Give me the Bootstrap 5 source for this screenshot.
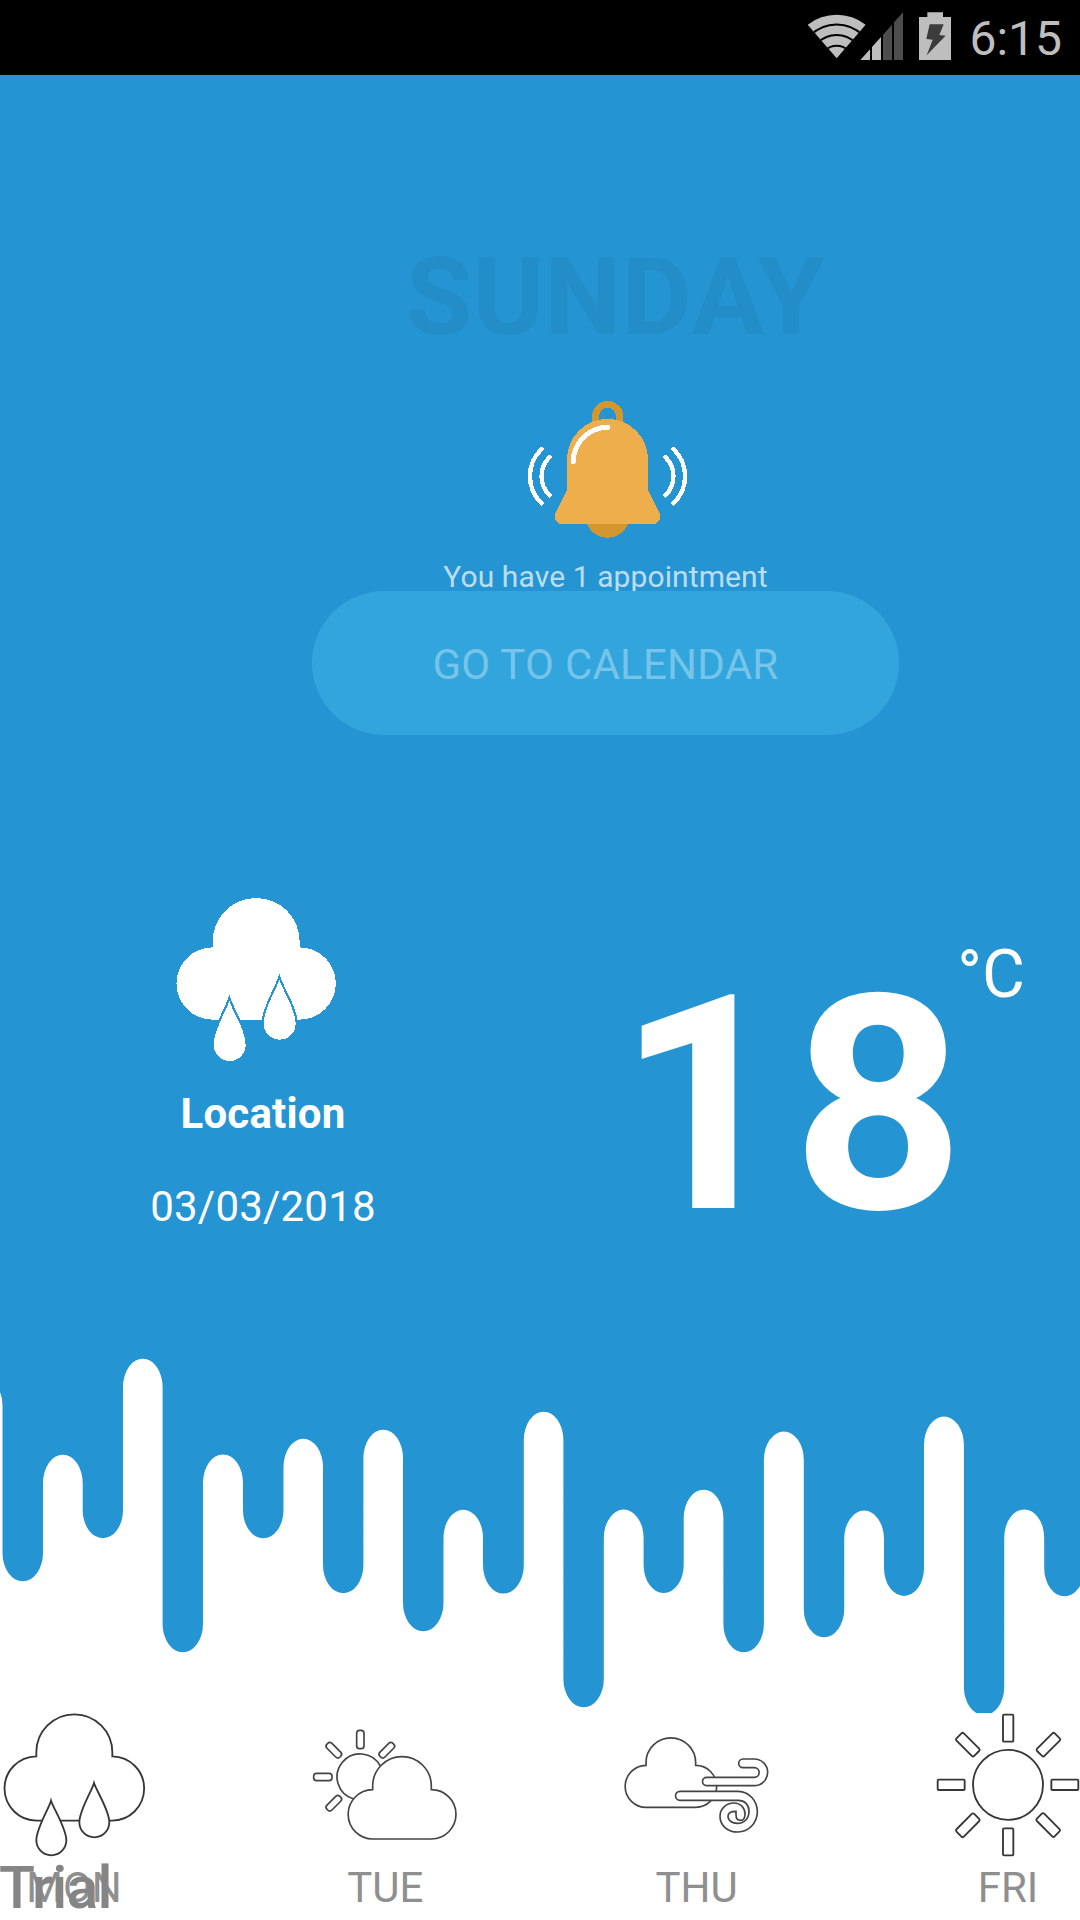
<!DOCTYPE html>
<html lang="en">
<head>
<meta charset="utf-8">
<meta name="viewport" content="width=device-width, initial-scale=1">
<title>Weather</title>
<link href="https://cdn.jsdelivr.net/npm/bootstrap@5.3.0/dist/css/bootstrap.min.css" rel="stylesheet">
<style>
:root { --sky: #2594d3; }
body { font-family: Roboto, sans-serif; font-size: 42px; line-height: 50px; background: #fff; }
svg { display: block; flex: none; overflow: visible; }
.screen { width: 1080px; height: 1920px; }
.status { height: 75px; background: #000; color: #bebebe; padding-right: 18px; }
.clock { font-size: 48px; line-height: 75px; padding-top: 2px; margin-left: 12px; }
.hero { background: var(--sky); height: 1275px; }
.agenda { width: 587px; margin-left: 312px; padding-top: 158px; }
.day-name { font-size: 108px; line-height: 128px; letter-spacing: .7px; color: #228dc6; padding-left: 20px; margin: 0; font-weight: 700; }
.bell { margin-top: 36px; }
.notice { font-size: 30px; line-height: 40px; height: 34px; margin-top: 16px; letter-spacing: .1px; color: rgba(255,255,255,.7); }
.btn-cal { --bs-btn-bg: #32a6dc; --bs-btn-hover-bg: #32a6dc; --bs-btn-color: #76c4e9; --bs-btn-border-width: 0; height: 144px; font-size: 42px; line-height: 50px; letter-spacing: .25px; }
.btn-cal span { padding-top: 4px; }
.place { width: 526px; padding-top: 163px; }
.town { margin-top: 27px; letter-spacing: .2px; }
.date { margin-top: 43px; letter-spacing: .2px; }
.degrees { font-size: 300px; line-height: 300px; padding-top: 221px; margin-left: 91px; letter-spacing: 3px; }
.unit { font-size: 66px; line-height: 80px; padding-top: 200px; margin-left: -10px; }
.forecast { height: 207px; padding-left: 2px; color: #8f8f8f; }
.forecast-day { width: 144px; }
.forecast-day div { margin-top: 6px; }
.line-art { fill: none; stroke: #363636; stroke-width: 5.5; }
.line-art.fine { stroke: #444; stroke-width: 5; }
.trial { left: -1px; top: 1856px; font-size: 59px; line-height: 64px; letter-spacing: -.8px; color: #858585; font-weight: 500; }
</style>
<script src="https://cdn.jsdelivr.net/npm/bootstrap@5.3.0/dist/js/bootstrap.bundle.min.js"></script>
</head>
<body>
<div class="screen d-flex flex-column position-relative overflow-hidden">
  <header class="status d-flex justify-content-end align-items-center">
    <svg width="152" height="75" viewBox="75 0 456 225">
      <defs><clipPath id="fan"><path d="M170 175 83 74A141 141 0 0 1 257 74Z"/></clipPath></defs>
      <g clip-path="url(#fan)">
        <rect x="75" y="30" width="190" height="150" fill="#bebebe"/>
        <g fill="none" stroke="#000" stroke-width="6">
          <circle cx="170" cy="185" r="111.5"/><circle cx="170" cy="185" r="80"/><circle cx="170" cy="185" r="48"/>
        </g>
      </g>
      <path fill="#bebebe" d="M241 180 270 148V180ZM276 141 303 111V180H276Z"/>
      <path fill="#4d4d4d" d="M309 104 336 74V180H309ZM342 67 369 37V180H342Z"/>
      <path fill="#bebebe" d="M417 51H442V37H489V51H513V180H417Z"/>
      <path fill="#3c3c3c" d="M449 73H491L478 105 497 107 440 166 458 119 439 117Z"/>
    </svg>
    <span class="clock">6:15</span>
  </header>

  <main class="hero text-white">
    <section class="agenda text-center">
      <h1 class="day-name">SUNDAY</h1>
      <svg class="bell mx-auto" width="170" height="144" viewBox="63 51 510 432" shape-rendering="crispEdges">
        <path fill="#d4962f" d="M276 130V110A47 47 0 0 1 370 110V130H348V109A25.5 25.5 0 0 0 297 109V130ZM261 432A66.6 66.6 0 0 0 384 432Z"/>
        <path fill="#efae4c" d="M201 238A121.5 121.5 0 0 1 444 238V331L477 395C486 414 476 432 460 432H185C169 432 159 414 168 395L201 331Z"/>
        <g fill="none" stroke="#fff" stroke-linecap="round">
          <path stroke-width="15" d="M220 245A103 103 0 0 1 323 142"/>
          <path stroke-width="13" d="M125 207A112 112 0 0 0 125 370M149 231A80 80 0 0 0 149 346M520 207A112 112 0 0 1 520 370M496 231A80 80 0 0 1 496 346"/>
        </g>
      </svg>
      <div class="notice">You have 1 appointment</div>
      <button type="button" class="btn btn-cal rounded-pill w-100 d-flex align-items-center justify-content-center position-relative p-0"><span>GO TO CALENDAR</span></button>
    </section>

    <section class="d-flex align-items-start">
      <div class="place text-center">
        <svg class="mx-auto" width="160" height="164" viewBox="160 54 480 492" shape-rendering="crispEdges">
          <path fill="#fff" d="M249 202V184.500A130.500 130.500 0 0 1 510 184.500V202A108.500 108.500 0 0 1 510 419H249A108.500 108.500 0 0 1 249 202Z"/>
          <g fill="#fff" stroke="#2594d3" stroke-width="13" paint-order="stroke">
            <path d="M299 363C289 393 252 452 252 495A48 48 0 0 0 348 495C348 452 309 393 299 363Z"/>
            <path d="M449 300C439 330 402 388 402 431A48 48 0 0 0 498 431C498 388 459 330 449 300Z"/>
          </g>
        </svg>
        <div class="town fw-bold">Location</div>
        <div class="date">03/03/2018</div>
      </div>
      <div class="degrees fw-bold">18</div>
      <div class="unit">°C</div>
    </section>
  </main>

  <svg width="1080" height="363" viewBox="0 1350 1080 363">
    <defs><clipPath id="edge"><path d="M0 1349H1080V1713H0Z"/></clipPath></defs>
    <path clip-path="url(#edge)" fill="#2594d3" d="M0 1349V1392Q2.500 1398 2.500 1405V1553A20 28 0 0 0 43 1553V1483A19.600 28 0 0 1 82.700 1483V1510A20 28 0 0 0 123 1510V1387A19.600 28 0 0 1 162.600 1387V1624A20 28 0 0 0 203 1624V1483A19.600 28 0 0 1 243 1483V1510A20 28 0 0 0 283.500 1510V1467A19.600 28 0 0 1 323 1467V1565A20 28 0 0 0 363.400 1565V1458A19.600 28 0 0 1 403 1458V1603A20 28 0 0 0 443.500 1603V1538A19.600 28 0 0 1 483 1538V1565A20 28 0 0 0 523.800 1565V1440A19.600 28 0 0 1 563.400 1440V1679A20 28 0 0 0 603.800 1679V1538A19.600 28 0 0 1 643.600 1538V1565A20 28 0 0 0 683.700 1565V1518A19.600 28 0 0 1 723.400 1518V1624A20 28 0 0 0 763.900 1624V1460A19.600 28 0 0 1 803.800 1460V1609A20 28 0 0 0 844.200 1609V1539A19.600 28 0 0 1 884 1539V1568A20 28 0 0 0 924 1568V1445A19.600 28 0 0 1 963.900 1445V1687A20 28 0 0 0 1004.200 1687V1538A19.600 28 0 0 1 1044.200 1538V1568A20 28 0 0 0 1084.600 1568V1349Z"/>
  </svg>

  <section class="forecast d-flex justify-content-between text-center">
    <div class="forecast-day">
      <svg class="line-art" width="144" height="144" viewBox="6 39 432 432">
        <path d="M126 362H111A96.500 96.500 0 0 1 109 169V157A114 114 0 0 1 337 157V169A96.500 96.500 0 0 1 335 362H328M180 362H237"/>
        <path d="M153 302C147 325 109 385 109 421A45 45 0 0 0 199 421C199 385 160 325 153 302ZM282 249C276 272 238 331 238 367A45 45 0 0 0 328 367C328 331 289 272 282 249Z"/>
      </svg>
      <div>MON</div>
    </div>
    <div class="forecast-day">
      <svg class="line-art fine" width="144" height="144" viewBox="40 9 432 432">
        <path d="M242 168A69 69 0 1 0 162 267"/>
        <rect x="171" y="61" width="22" height="55" rx="9"/>
        <rect x="42" y="190" width="55" height="22" rx="9"/>
        <rect x="75" y="110" width="55" height="21" rx="9" transform="rotate(45 102.500 120.500)"/>
        <rect x="234" y="110" width="55" height="21" rx="9" transform="rotate(-45 261.500 120.500)"/>
        <rect x="75" y="269" width="55" height="21" rx="9" transform="rotate(-45 102.500 279.500)"/>
        <path d="M220 387A74 74 0 0 1 219 239V228A88 88 0 0 1 395 228V239A74 74 0 0 1 395 387Z"/>
      </svg>
      <div>TUE</div>
    </div>
    <div class="forecast-day">
      <svg class="line-art fine" width="144" height="144" viewBox="44 9 432 432">
        <path d="M108 292A63 63 0 0 1 107 166V158A74.500 74.500 0 0 1 256 158V166A63 63 0 0 1 256 292Z"/>
        <path fill="#fff" d="M289 202H432A14.500 14.500 0 0 0 432 173H398A13 13 0 0 1 398 147H432A40 40 0 0 1 432 227H289A12.500 12.500 0 0 1 289 202Z"/>
        <path fill="#fff" d="M209 244H384A58 61 0 0 1 382 366C351 366 329 346 329 319C329 296 347 279 371 279C391 279 404 294 404 312C404 324 400 331 391 331C382 331 377 325 377 314V304C362 304 353 309 353 319C353 332 366 340 381 340C403 340 416 325 416 304C416 284 403 271 384 271H209A13.500 13.500 0 0 1 209 244Z"/>
      </svg>
      <div>THU</div>
    </div>
    <div class="forecast-day">
      <svg class="line-art" width="144" height="144" viewBox="48 69 432 432">
        <circle cx="264" cy="284.500" r="105"/>
        <g>
          <rect x="249" y="74" width="31" height="81" rx="3"/><rect x="249" y="415" width="31" height="81" rx="3"/>
          <rect x="53" y="269" width="81" height="31" rx="3"/><rect x="394" y="269" width="81" height="31" rx="3"/>
        </g>
        <g transform="rotate(45 264 284.500)">
          <rect x="249" y="76" width="31" height="75" rx="5"/><rect x="249" y="418" width="31" height="75" rx="5"/>
          <rect x="56" y="269" width="75" height="31" rx="5"/><rect x="397" y="269" width="75" height="31" rx="5"/>
        </g>
      </svg>
      <div>FRI</div>
    </div>
  </section>
  <div class="trial position-absolute">Trial</div>
</div>
</body>
</html>
